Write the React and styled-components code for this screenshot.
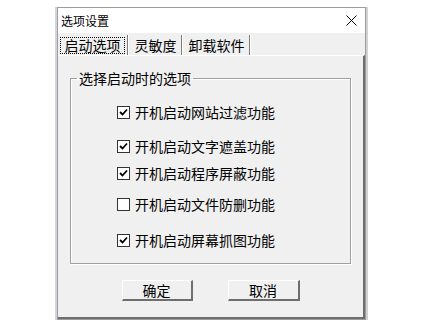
import React from 'react';
import styled, { createGlobalStyle } from 'styled-components';

const GlobalStyle = createGlobalStyle`
  html, body {
    margin: 0;
    padding: 0;
    background: #ffffff;
  }
  body {
    font-family: "Noto Sans CJK SC", "Noto Sans", sans-serif;
    color: #000;
  }
`;

const Stage = styled.div`
  width: 439px;
  height: 327px;
  padding: 7px 0 0 57px;
  box-sizing: border-box;
`;

const Window = styled.div`
  width: 309px;
  height: 313px;
  box-sizing: border-box;
  display: flex;
  flex-direction: column;
  background: #f0f0f0;
  border: 1px solid #9c9c9c;
  box-shadow: -2px 0 0 #d6d3e0, 2px 0 0 #d2d2d2;
`;

const TitleBar = styled.div`
  height: 25px;
  flex: none;
  display: flex;
  align-items: center;
  justify-content: space-between;
  padding: 0 8px 0 3px;
  background: #ffffff;
`;

const TitleText = styled.span`
  font-size: 12px;
  line-height: 16px;
`;

const CloseButton = styled.span`
  display: flex;
  width: 11px;
  height: 11px;
`;

const TabStrip = styled.div`
  height: 22px;
  flex: none;
  display: flex;
  align-items: flex-end;
`;

const Tab = styled.div`
  height: 20px;
  width: ${p => p.$w}px;
  box-sizing: border-box;
  display: flex;
  align-items: center;
  justify-content: center;
  font-size: 14px;
  line-height: 18px;
  border-right: 1px solid #7c7c7c;
  box-shadow: 1px 0 0 #ffffff;
  margin-right: 2px;
`;

const FocusRing = styled.span`
  display: flex;
  align-items: center;
  justify-content: center;
  width: calc(100% - 4px);
  height: 17px;
  box-sizing: border-box;
  border: 1px dotted #000;
`;

const Panel = styled.div`
  flex: 1;
  display: flex;
  flex-direction: column;
  border-top: 1px solid #ffffff;
  border-right: 2px solid #6e6e6e;
  border-bottom: 2px solid #6e6e6e;
`;

const Group = styled.fieldset`
  margin: 13px 12px 0 12px;
  padding: 16px 6px 14px 6px;
  border: 1px solid #a0a0a0;
  box-shadow: inset 1px 1px 0 #ffffff, 1px 1px 0 #ffffff;
  display: flex;
  flex-direction: column;
`;

const Legend = styled.legend`
  padding: 0 2px;
  font-size: 14px;
  line-height: 18px;
`;

const OptionRow = styled.label`
  display: flex;
  align-items: center;
  gap: 5px;
  height: 18px;
  margin-top: ${p => p.$gap}px;
  padding-left: 40px;
  font-size: 14px;
  line-height: 18px;
`;

const Box = styled.span`
  width: 13px;
  height: 13px;
  box-sizing: border-box;
  border: 1px solid #333333;
  background: #ffffff;
  display: flex;
  align-items: center;
  justify-content: center;
`;

const ButtonRow = styled.div`
  display: flex;
  justify-content: center;
  gap: 35px;
  margin-top: 16px;
`;

const Button = styled.button`
  width: ${p => p.$w}px;
  height: 21px;
  padding: 0;
  box-sizing: border-box;
  background: #f0f0f0;
  border-style: solid;
  border-width: 1px 2px 2px 1px;
  border-color: #ffffff #6e6e6e #6e6e6e #ffffff;
  font-family: "Noto Sans CJK SC", "Noto Sans", sans-serif;
  font-size: 14px;
  line-height: 18px;
  color: #000;
`;

const options = [
  { label: '开机启动网站过滤功能', checked: true, gap: 0 },
  { label: '开机启动文字遮盖功能', checked: true, gap: 16 },
  { label: '开机启动程序屏蔽功能', checked: true, gap: 9 },
  { label: '开机启动文件防删功能', checked: false, gap: 13 },
  { label: '开机启动屏幕抓图功能', checked: true, gap: 18 },
];

function CheckBox({ checked }) {
  return (
    <Box>
      {checked && (
        <svg width="9" height="9" viewBox="0 0 9 9">
          <path d="M1 4 L3.5 6.5 L8 1.5" fill="none" stroke="#000" strokeWidth="1.8" />
        </svg>
      )}
    </Box>
  );
}

export default function App() {
  return (
    <>
      <GlobalStyle />
      <Stage>
        <Window>
          <TitleBar>
            <TitleText>选项设置</TitleText>
            <CloseButton>
              <svg width="11" height="11" viewBox="0 0 11 11">
                <path d="M0.5 0.5 L10.5 10.5 M10.5 0.5 L0.5 10.5" stroke="#000" strokeWidth="1" />
              </svg>
            </CloseButton>
          </TitleBar>
          <TabStrip>
            <Tab $w={70}><FocusRing>启动选项</FocusRing></Tab>
            <Tab $w={52}>灵敏度</Tab>
            <Tab $w={66}>卸载软件</Tab>
          </TabStrip>
          <Panel>
            <Group>
              <Legend>选择启动时的选项</Legend>
              {options.map(o => (
                <OptionRow key={o.label} $gap={o.gap}>
                  <CheckBox checked={o.checked} />
                  {o.label}
                </OptionRow>
              ))}
            </Group>
            <ButtonRow>
              <Button $w={71}>确定</Button>
              <Button $w={72}>取消</Button>
            </ButtonRow>
          </Panel>
        </Window>
      </Stage>
    </>
  );
}
